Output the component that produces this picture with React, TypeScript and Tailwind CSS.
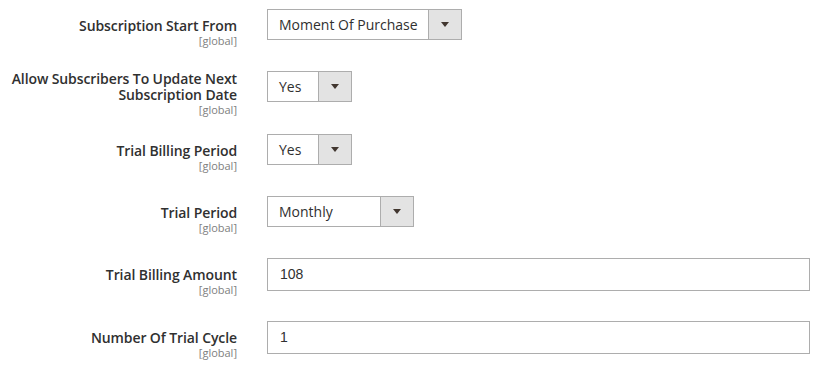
import React from "react";

const labelFont = { fontFamily: '"Open Sans", "Noto Sans", sans-serif' };

function Label({ lines, twoLine }: { lines: string[]; twoLine?: boolean }) {
  return (
    <div
      className={`w-[237px] shrink-0 text-right ${twoLine ? "pt-0" : "pt-[9px]"}`}
      style={labelFont}
    >
      {lines.map((l) => (
        <div
          key={l}
          className="text-[14px] leading-[16px] font-semibold tracking-[-0.1px] text-[#303030]"
        >
          {l}
        </div>
      ))}
      <div className="text-[11px] leading-[12px] mt-[1px] text-[#808080]">[global]</div>
    </div>
  );
}

function Select({ value, width }: { value: string; width: string }) {
  return (
    <div
      className={`${width} h-[31px] flex border border-[#adadad] bg-white box-border`}
      style={labelFont}
    >
      <div className="flex-1 flex items-center pl-[11px] text-[14px] text-[#303030]">{value}</div>
      <div className="w-[33px] h-full border-l border-[#adadad] bg-[#e3e3e3] flex items-center justify-center">
        <svg width="8" height="5" viewBox="0 0 8 5">
          <path d="M0 0 H8 L4 5 Z" fill="#41362f" />
        </svg>
      </div>
    </div>
  );
}

function Input({ value }: { value: string }) {
  return (
    <div
      className="w-[543px] h-[33px] border border-[#adadad] bg-white flex items-center pl-[12px] text-[14px] text-[#303030] box-border"
      style={{ fontFamily: '"Liberation Sans", Arial, sans-serif' }}
    >
      {value}
    </div>
  );
}

export default function App() {
  return (
    <div className="w-[817px] h-[369px] bg-white pt-[9px] overflow-hidden">
      <div className="flex h-[62px]">
        <Label lines={["Subscription Start From"]} />
        <div className="ml-[30px]">
          <Select value="Moment Of Purchase" width="w-[195px]" />
        </div>
      </div>
      <div className="flex h-[63px]">
        <Label lines={["Allow Subscribers To Update Next", "Subscription Date"]} twoLine />
        <div className="ml-[30px]">
          <Select value="Yes" width="w-[85px]" />
        </div>
      </div>
      <div className="flex h-[62px]">
        <Label lines={["Trial Billing Period"]} />
        <div className="ml-[30px]">
          <Select value="Yes" width="w-[85px]" />
        </div>
      </div>
      <div className="flex h-[62px]">
        <Label lines={["Trial Period"]} />
        <div className="ml-[30px]">
          <Select value="Monthly" width="w-[147px]" />
        </div>
      </div>
      <div className="flex h-[63px]">
        <Label lines={["Trial Billing Amount"]} />
        <div className="ml-[30px]">
          <Input value="108" />
        </div>
      </div>
      <div className="flex h-[63px]">
        <Label lines={["Number Of Trial Cycle"]} />
        <div className="ml-[30px]">
          <Input value="1" />
        </div>
      </div>
    </div>
  );
}
